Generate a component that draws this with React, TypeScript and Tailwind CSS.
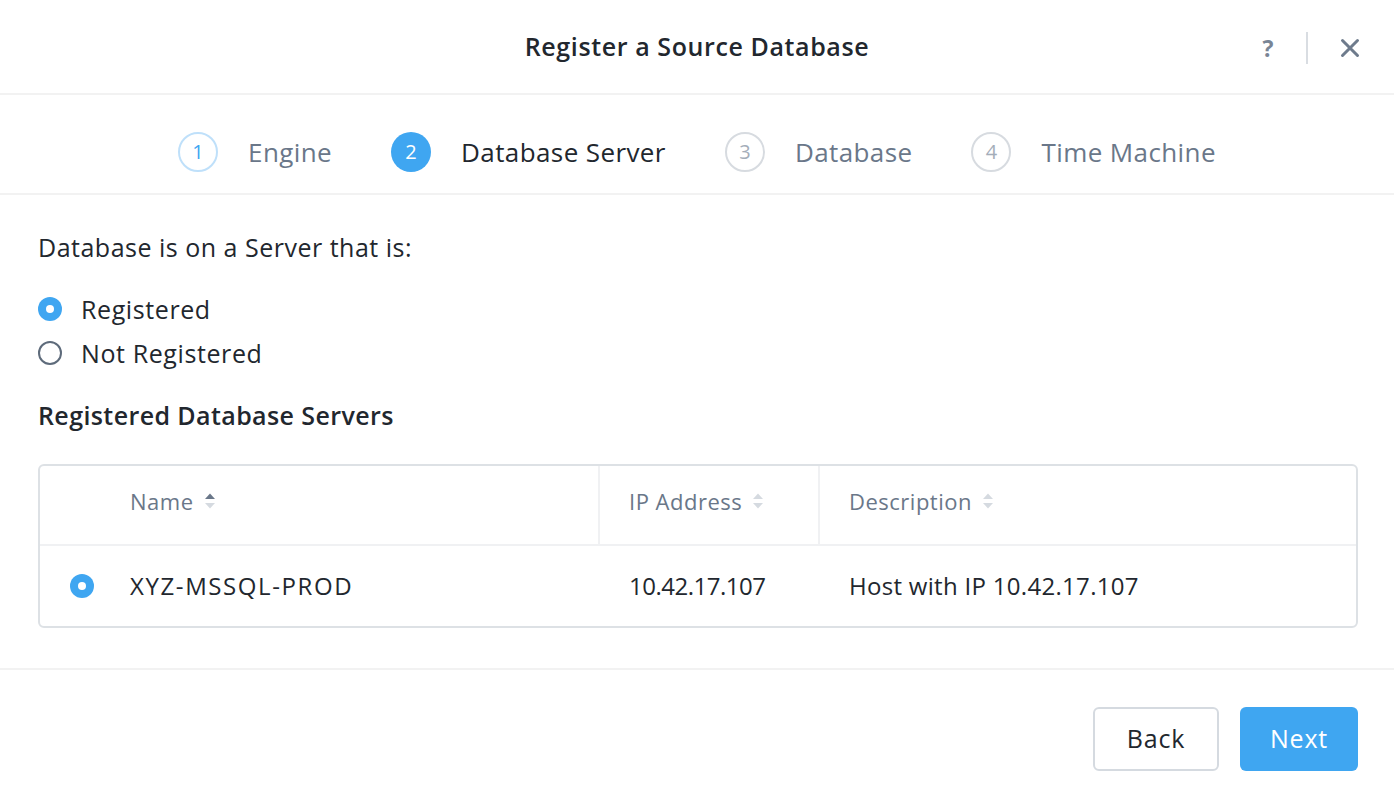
import React from "react";

const FONT = { fontFamily: "'Open Sans', Lato, 'Liberation Sans', sans-serif" };

const STEPS = [
  { n: 1, label: "Engine", state: "done" },
  { n: 2, label: "Database Server", state: "active" },
  { n: 3, label: "Database", state: "todo" },
  { n: 4, label: "Time Machine", state: "todo" },
];

function SortIcon({ active }: { active?: boolean }) {
  return (
    <svg width="12" height="20" viewBox="0 0 12 20" className="ml-[10px]">
      <path d="M1 8 L6 2.5 L11 8 Z" fill={active ? "#6a7789" : "#d5dae0"} />
      <path d="M1 12 L6 17.5 L11 12 Z" fill="#d5dae0" />
    </svg>
  );
}

function Radio({ checked }: { checked: boolean }) {
  return checked ? (
    <span className="w-6 h-6 rounded-full bg-[#3fa6f1] flex items-center justify-center shrink-0">
      <span className="w-2 h-2 rounded-full bg-white" />
    </span>
  ) : (
    <span className="w-6 h-6 rounded-full border-2 border-[#5e6b7b] shrink-0" />
  );
}

export default function App() {
  return (
    <div className="w-[1394px] h-[794px] bg-white text-[#22272e] flex flex-col overflow-hidden" style={FONT}>
      {/* header */}
      <div className="relative h-[95px] flex items-center justify-center border-b-2 border-[#f2f2f2] shrink-0">
        <h1 className="text-[25px] font-semibold tracking-[0.6px]">Register a Source Database</h1>
        <div className="absolute right-[34px] top-[31px] flex items-center">
          <span className="text-[23px] font-bold text-[#798595] w-8 text-center">?</span>
          <span className="w-[2px] h-[32px] bg-[#d9dde2] ml-[22px] mr-[32px]" />
          <svg width="20" height="20" viewBox="0 0 20 20">
            <path d="M2.5 2.5 L17.5 17.5 M17.5 2.5 L2.5 17.5" stroke="#6e7b8c" strokeWidth="3" strokeLinecap="round" />
          </svg>
        </div>
      </div>

      {/* steps */}
      <div className="h-[100px] flex items-center justify-center border-b-2 border-[#f2f2f2] shrink-0 pt-[16px]">
        {STEPS.map((s, i) => (
          <div key={s.n} className={`flex items-center ${i > 0 ? "ml-[59px]" : ""}`}>
            <span
              className={`w-10 h-10 rounded-full flex items-center justify-center text-[20px] ${
                s.state === "active"
                  ? "bg-[#3fa6f1] text-white"
                  : s.state === "done"
                  ? "border-2 border-[#bfe0fa] text-[#3fa6f1]"
                  : "border-2 border-[#d7dbe0] text-[#a4adb9]"
              }`}
            >
              {s.n}
            </span>
            <span
              className={`ml-[30px] text-[26px] tracking-[0.4px] ${
                s.state === "active" ? "text-[#22272e]" : "text-[#6a7789]"
              }`}
            >
              {s.label}
            </span>
          </div>
        ))}
      </div>

      {/* body */}
      <div className="flex-1 px-[38px] pt-[38px] flex flex-col">
        <p className="text-[25px] leading-[28px] tracking-[0.5px]">Database is on a Server that is:</p>
        <div className="mt-[34px] flex flex-col gap-[16px]">
          <label className="flex items-center gap-[19px] text-[25px] leading-[28px] tracking-[0.6px]">
            <Radio checked /> Registered
          </label>
          <label className="flex items-center gap-[19px] text-[25px] leading-[28px] tracking-[0.6px]">
            <Radio checked={false} /> Not Registered
          </label>
        </div>
        <h2 className="mt-[34px] text-[25px] leading-[28px] font-semibold tracking-[0.4px]">Registered Database Servers</h2>

        <div className="mt-[35px] border-2 border-[#dde1e5] rounded-[6px] overflow-hidden w-[1320px]">
          <div className="grid grid-cols-[90px_470px_220px_1fr] h-[80px] border-b-2 border-[#f0f1f3] text-[22px] tracking-[0.5px] text-[#6a7789]">
            <div />
            <div className="flex items-center pb-[8px] border-r-2 border-[#f0f1f3]">
              Name <SortIcon active />
            </div>
            <div className="flex items-center pb-[8px] pl-[29px] border-r-2 border-[#f0f1f3]">
              IP Address <SortIcon />
            </div>
            <div className="flex items-center pb-[8px] pl-[29px]">
              Description <SortIcon />
            </div>
          </div>
          <div className="grid grid-cols-[90px_470px_220px_1fr] h-[80px] text-[24px]">
            <div className="flex items-center pl-[30px]">
              <Radio checked />
            </div>
            <div className="flex items-center tracking-[1.6px]">XYZ-MSSQL-PROD</div>
            <div className="flex items-center pl-[29px] tracking-[-0.5px]">10.42.17.107</div>
            <div className="flex items-center pl-[29px] tracking-[0.3px]">Host with IP 10.42.17.107</div>
          </div>
        </div>
      </div>

      {/* footer */}
      <div className="h-[126px] border-t-2 border-[#f2f2f2] flex items-center justify-end gap-[21px] pr-[36px] pt-[14px] shrink-0">
        <button className="w-[126px] h-[64px] rounded-[6px] border-2 border-[#d5dae0] bg-white text-[25px] tracking-[0.8px] text-[#22272e]">
          Back
        </button>
        <button className="w-[118px] h-[64px] rounded-[6px] bg-[#3fa6f1] text-[25px] tracking-[0.8px] text-white">
          Next
        </button>
      </div>
    </div>
  );
}
